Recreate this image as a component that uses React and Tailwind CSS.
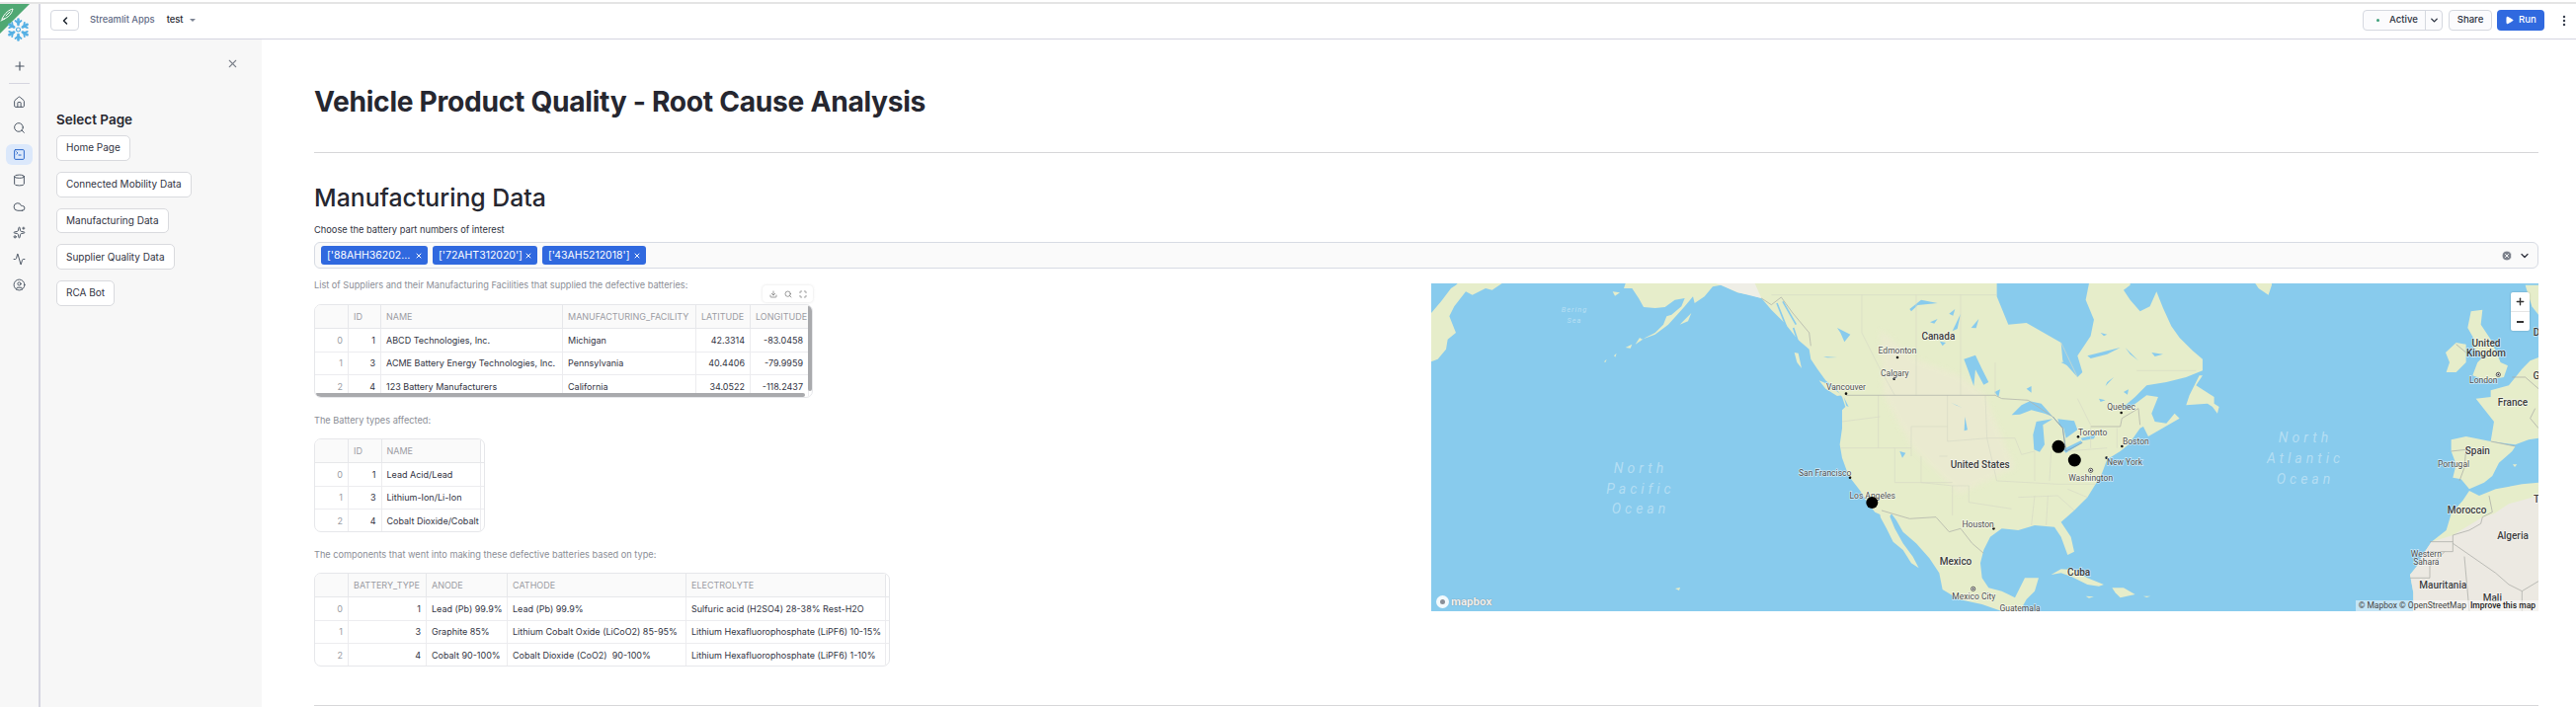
import React from "react";
import { Plus, Home, Search, SquareTerminal, Cylinder, Cloud, Sparkles, Activity, CircleUser, ChevronLeft, ChevronDown, Play, EllipsisVertical, X, Download, Maximize, CircleX } from "lucide-react";

const land = "#e6edca";
const water = "#88cbed";
const sand = "#ece9e2";

function Logo() {
  const arms = [0, 60, 120, 180, 240, 300];
  return (
    <svg width="39" height="50" viewBox="0 0 39 50" className="block">
      <polygon points="0,0 30,0 0,30" fill="#4fa873" />
      <g fill="none" stroke="#fff" strokeWidth="1" strokeLinecap="round">
        <path d="M2 15 C5 9 9 6 13 5 C12 10 8 14 4 15 Z" />
        <path d="M1 17 L5 15 M6 12 L10 8" />
      </g>
      <g transform="translate(18.5 26)" stroke="#55b0e4" strokeWidth="2.6" strokeLinecap="round" fill="none">
        {arms.map((a) => (
          <g key={a} transform={`rotate(${a})`}>
            <path d="M0 -5 L0 -10.5" />
            <path d="M-3 -9 L0 -6.5 L3 -9" strokeWidth="1.8" />
          </g>
        ))}
        <circle r="2" strokeWidth="1.2" />
      </g>
    </svg>
  );
}

const railIcons = [Home, Search, SquareTerminal, Cylinder, Cloud, Sparkles, Activity, CircleUser];

function Rail() {
  return (
    <aside className="flex w-[41px] shrink-0 flex-col border-r-2 border-[#d5d5e0] bg-[#f7f7f7]">
      <Logo />
      <div className="flex h-[26px] items-center justify-center">
        <Plus size={14} className="text-[#4b5563]" />
      </div>
      <div className="mx-[9px] mt-[4px] h-px bg-[#d5d5e0]" />
      <div className="mt-[5px] flex flex-col">
        {railIcons.map((Icon, i) => (
          <div key={i} className="flex h-[26.5px] items-center justify-center">
            <div className={i === 2 ? "flex h-[21px] w-[27px] items-center justify-center rounded-md bg-[#dbe8fb]" : "flex h-[21px] w-[27px] items-center justify-center"}>
              <Icon size={13} strokeWidth={1.8} className={i === 2 ? "text-[#2563c9]" : "text-[#4b5563]"} />
            </div>
          </div>
        ))}
      </div>
    </aside>
  );
}

function Header() {
  return (
    <header className="flex h-[36px] shrink-0 items-center border-b border-[#d5d5e0] bg-white pb-[2px] pl-[10px] pr-[5px]">
      <button className="flex h-[21px] w-[29px] items-center justify-center rounded-[4px] border border-[#d5d8e0]">
        <ChevronLeft size={12} strokeWidth={3} className="text-[#1e252f]" />
      </button>
      <span className="ml-[11px] text-[9.4px] font-medium text-[#5f6b85]">Streamlit Apps</span>
      <span className="ml-[12px] text-[9.4px] font-medium text-[#1e252f]">test</span>
      <span className="ml-[6px] h-0 w-0 border-x-[3px] border-t-[3px] border-x-transparent border-t-[#7d8494]" />
      <div className="ml-auto flex items-center">
        <div className="flex h-[21px] w-[81px] items-center rounded-[4px] border border-[#d5d8e0] bg-[#fbfbfd]">
          <span className="ml-[13px] h-[3px] w-[3px] rounded-full bg-[#3f9f7b]" />
          <span className="ml-[10px] w-[28px] text-[9.6px] font-medium text-[#2b3240]">Active</span>
          <span className="ml-[8px] h-full w-px bg-[#d5d8e0]" />
          <span className="flex flex-1 justify-center"><ChevronDown size={11} strokeWidth={3} className="text-[#2b3240]" /></span>
        </div>
        <div className="ml-[6px] flex h-[21px] w-[44px] items-center justify-center rounded-[4px] border border-[#d5d8e0] bg-[#fbfbfd] text-[9.6px] font-medium text-[#2b3240]">Share</div>
        <div className="ml-[5px] flex h-[21px] w-[48px] items-center justify-center gap-[5px] rounded-[4px] bg-[#3069df] text-[9.6px] font-medium text-white">
          <Play size={9} fill="#fff" />Run
        </div>
        <EllipsisVertical size={14} strokeWidth={2.2} className="ml-[13px] text-[#3b4250]" />
      </div>
    </header>
  );
}

const pages = ["Home Page", "Connected Mobility Data", "Manufacturing Data", "Supplier Quality Data", "RCA Bot"];

function Sidebar() {
  return (
    <nav className="flex w-[224px] shrink-0 flex-col bg-[#f7f7f7] pl-[16px]">
      <div className="mt-[18px] flex justify-end pr-[23px]">
        <X size={13} className="text-[#7d828c]" />
      </div>
      <h3 className="mt-[42px] text-[13.5px] font-semibold leading-[16px] text-[#262730]">Select Page</h3>
      <div className="mt-[8px] flex flex-col items-start gap-[11px]">
        {pages.map((p) => (
          <button key={p} className="flex h-[25.75px] items-center rounded-[5px] border border-[#d9dade] bg-white px-[9px] text-[10px] text-[#31333f]">{p}</button>
        ))}
      </div>
    </nav>
  );
}

function Table({ cols, rows, outer, children }) {
  return (
    <div className="relative h-[95px] overflow-hidden rounded-[7px] border border-[#e6e7ea] bg-white" style={{ width: outer }}>
      <div className="flex h-[24px] border-b border-[#e6e7ea]">
        {cols.map((c, i) => (
          <div key={i} className="flex items-center overflow-hidden whitespace-nowrap border-r border-[#e6e7ea] bg-[#fafafa] px-[5px] text-[9px] text-[#9a9ca3]" style={{ width: c.w }}>{c.label}</div>
        ))}
      </div>
      {rows.map((r, ri) => (
        <div key={ri} className="flex h-[23.5px] border-b border-[#ececef]">
          {r.map((v, i) => (
            <div key={i} className={`flex items-center overflow-hidden whitespace-pre border-r border-[#ececef] px-[5px] text-[9px] ${cols[i].right ? "justify-end" : ""} ${i === 0 ? "text-[#9a9ca3]" : "text-[#31333f]"}`} style={{ width: cols[i].w }}>{v}</div>
          ))}
        </div>
      ))}
      {children}
    </div>
  );
}

const t1cols = [
  { w: 34, label: "", right: true }, { w: 33, label: "ID", right: true }, { w: 184, label: "NAME" },
  { w: 135, label: "MANUFACTURING_FACILITY" }, { w: 55, label: "LATITUDE", right: true }, { w: 59, label: "LONGITUDE", right: true },
];
const t1rows = [
  ["0", "1", "ABCD Technologies, Inc.", "Michigan", "42.3314", "-83.0458"],
  ["1", "3", "ACME Battery Energy Technologies, Inc.", "Pennsylvania", "40.4406", "-79.9959"],
  ["2", "4", "123 Battery Manufacturers", "California", "34.0522", "-118.2437"],
];
const t2cols = [{ w: 34, label: "", right: true }, { w: 33.5, label: "ID", right: true }, { w: 100, label: "NAME" }];
const t2rows = [["0", "1", "Lead Acid/Lead"], ["1", "3", "Lithium-Ion/Li-Ion"], ["2", "4", "Cobalt Dioxide/Cobalt"]];
const t3cols = [
  { w: 34, label: "", right: true }, { w: 79, label: "BATTERY_TYPE", right: true }, { w: 82, label: "ANODE" },
  { w: 181, label: "CATHODE" }, { w: 202, label: "ELECTROLYTE" },
];
const t3rows = [
  ["0", "1", "Lead (Pb) 99.9%", "Lead (Pb) 99.9%", "Sulfuric acid (H2SO4) 28-38% Rest-H2O"],
  ["1", "3", "Graphite 85%", "Lithium Cobalt Oxide (LiCoO2) 85-95%", "Lithium Hexafluorophosphate (LiPF6) 10-15%"],
  ["2", "4", "Cobalt 90-100%", "Cobalt Dioxide (CoO2)  90-100%", "Lithium Hexafluorophosphate (LiPF6) 1-10%"],
];

function Tag({ w, children }) {
  return (
    <span className="flex h-[19px] items-center justify-between rounded-[3px] bg-[#3069df] pl-[6px] pr-[5px] text-[10.5px] text-white" style={{ width: w }}>
      <span>{children}</span>
      <X size={8} strokeWidth={3} />
    </span>
  );
}

const mainland = "-313,0 -318,15 -293,15 -273,45 -258,72 -223,75 -193,72 -163,50 -133,45 -143,70 -173,95 -188,100 -198,125 -223,150 -253,165 -283,185 -263,170 -223,155 -183,125 -133,70 -108,40 -103,60 -73,40 -48,10 -23,5 27,28 67,35 100,45 130,80 170,120 210,170 245,200 250,230 270,260 295,295 330,325 345,345 355,375 345,385 345,440 338,490 345,530 365,585 400,630 425,670 445,695 460,702 462,712 480,745 500,785 530,810 555,850 578,865 560,830 530,790 505,745 490,708 495,700 510,720 530,755 570,790 610,835 640,880 650,930 700,960 770,975 830,996 885,996 905,960 930,935 942,895 900,895 885,925 870,955 830,935 790,925 770,895 765,850 775,810 795,770 830,745 880,750 930,735 990,740 1010,770 1030,825 1050,815 1040,770 1010,725 1050,690 1090,650 1115,610 1135,575 1150,535 1190,510 1215,490 1250,440 1260,435 1275,465 1370,410 1355,395 1330,425 1295,420 1285,395 1305,345 1270,340 1210,385 1200,375 1235,345 1270,310 1330,300 1390,285 1440,265 1440,230 1410,205 1370,165 1345,130 1320,75 1300,25 1280,70 1250,85 1220,50 1200,20 1220,5 1220,0";

const waters = [
  "815,0 815,40 850,125 905,120 1010,180 1015,235 1060,285 1075,270 1060,220 1100,160 1110,110 1085,50 1095,0",
  "860,400 890,370 915,358 950,365 985,405 960,395 920,385 885,398",
  "935,420 985,412 955,430 960,490 945,512 928,505 925,460",
  "1000,412 1050,418 1060,445 1025,470 1018,440 1005,430",
  "1015,505 1070,478 1075,484 1025,515",
  "1070,470 1115,460 1110,472 1075,478",
  "715,230 750,218 770,260 790,300 775,308 750,262 745,312 728,265",
  "550,78 585,50 635,60 575,66 555,85",
  "612,118 635,108 625,122",
  "670,92 688,78 682,98",
  "680,145 705,92 695,138",
  "737,135 760,108 752,136",
  "642,176 660,180 650,190",
  "330,135 370,155 352,178 340,150",
  "288,222 330,225 300,226",
  "808,330 825,322 820,345",
  "905,320 920,312 920,332",
  "676,362 710,378 690,370",
  "718,405 726,445 716,448",
  "520,510 538,515 528,530",
  "1090,220 1150,205 1190,195 1150,215 1100,228",
  "1205,195 1245,235 1220,215",
  "1285,210 1320,215 1295,222",
  "1150,300 1170,285 1145,312",
  "1125,350 1145,355 1130,360",
  "1200,330 1215,322 1212,338",
  "1130,150 1150,155 1140,160",
  "1010,240 1030,235 1030,250",
];

const islands = [
  "1430,280 1440,280 1420,310 1475,345 1475,365 1490,375 1485,395 1470,375 1455,365 1390,370 1400,340",
  "980,885 1010,868 1050,870 1090,895 1140,915 1125,920 1090,915 1040,890 1010,880",
  "1165,925 1200,925 1235,945 1190,955 1175,940",
  "1085,950 1110,952 1095,956",
  "1260,950 1282,950 1270,954",
  "1600,0 1610,15 1640,35 1650,5 1650,0",
  "275,295 300,305 345,340 330,342 295,320",
  "200,210 212,212 222,258 208,240",
  "-148,125 -113,90 -123,115",
  "-313,195 -293,185 -298,197",
  "-348,220 -340,212 -344,224",
  "-378,238 -370,230 -374,240",
  "-283,185 -270,165 -262,170",
  "-352,25 -330,28 -345,38",
];

const europe = [
  "475,135 485,85 520,80 515,125 545,170 575,240 597,250 585,285 530,295 490,280 505,240 520,225 490,190 495,170",
  "440,180 470,185 470,240 440,270 410,270 420,240 408,210",
  "650,5 690,5 690,95 670,70",
  "500,350 545,345 545,325 600,310 640,260 665,235 690,225 690,470 660,475 620,490 545,480 555,420",
  "425,475 470,465 545,480 620,495 610,510 570,545 550,585 525,605 480,625 455,595 430,590 440,550 425,510",
  "612,550 625,550 618,558",
];

const faint = "M130 35L815 35M405 35L405 150L455 250L505 340M570 35L570 340M705 35L705 340M810 240L810 340M1010 180L1060 285M345 420L460 405M340 500L555 500M455 340L455 500M555 435L665 435M555 435L555 525M665 340L665 480L790 470L870 470M505 500L505 605L680 605M585 525L585 605L680 615L680 705M780 340L785 470L815 600M640 525L665 525M680 615L730 615L730 665L860 685M815 600L1000 610L1115 610M880 650L1000 645L1050 690M930 645L920 735M970 645L965 735M870 470L890 520L930 510L930 600M980 510L975 600M1030 510L1150 500M1090 650L1030 625M1100 440L1100 500M1180 440L1180 500M1240 265L1420 265M1060 350L1100 430";
const border = "M357 340L810 340L830 350L910 355L985 405L1015 440L1025 510M465 690L550 715L630 710L670 755L705 745L740 790L775 820M1100 435L1190 435L1195 410L1245 380L1250 430M100 45L130 65L160 42L195 90L245 150L250 190";

const labels = [
  ["Canada", 637, 162, 1],
  ["Edmonton", 513, 205], ["Calgary", 505, 272], ["Vancouver", 357, 316], ["San Francisco", 293, 577], ["Los Angeles", 437, 646],
  ["United States", 764, 551, 1], ["Houston", 758, 733], ["Mexico", 690, 845, 1], ["Mexico City", 745, 950], ["Guatemala", 885, 988],
  ["Cuba", 1064, 880, 1], ["Toronto", 1106, 452], ["Washington", 1100, 590], ["New York", 1203, 544], ["Boston", 1237, 481], ["Quebec", 1193, 375],
  ["United", 2301, 184, 1], ["Kingdom", 2301, 214, 1], ["London", 2293, 294], ["France", 2382, 363, 1], ["Spain", 2275, 511, 1], ["Portugal", 2202, 548],
  ["Morocco", 2243, 691, 1], ["Algeria", 2382, 769, 1], ["Western", 2119, 822], ["Sahara", 2119, 846], ["Mauritania", 2170, 917, 1], ["Mali", 2320, 957, 1],
  ["D", 2454, 150, 1], ["G", 2454, 282, 1], ["T", 2454, 658, 1],
];
const cities = [[513, 225], [503, 290], [357, 335], [369, 590], [805, 745], [1062, 466], [1148, 530], [1195, 495], [1193, 393]];
const capitals = [[743, 928], [1100, 568], [2338, 277]];
const oceans = [
  ["North", 1661 - 1449, 473 - 286], ["Pacific", 212, 208], ["Ocean", 212, 228],
  ["North", 2334 - 1449, 442 - 286], ["Atlantic", 885, 177], ["Ocean", 885, 198],
];

function MapArt() {
  return (
    <svg viewBox="0 0 1121 332" className="block h-full w-full">
      <rect width="1121" height="332" fill={water} />
      <polygon transform="scale(.3333)" fill={land} points="0,90 30,55 60,15 75,5 80,0 215,0 185,20 165,15 125,35 105,25 70,70 55,100 75,150 50,170 45,200 20,230 0,238" />
      <g transform="translate(301 0) scale(.3333)">
        <polygon points={mainland} fill={land} />
        <polygon points="-40,0 80,0 100,45 30,28 -23,5" fill="#efeee6" />
        <polygon points="460,140 570,230 700,280 780,340 870,560 700,640 560,500 470,340" fill="#ecead2" opacity=".75" className="blur-[8px]" />
        {waters.map((p, i) => <polygon key={i} points={p} fill={water} />)}
        {islands.map((p, i) => <polygon key={i} points={p} fill={land} />)}
        <path d="M147 60L175 130M165 55L205 125M197 135L212 180" stroke={water} strokeWidth="5" fill="none" />
        <polygon points="350,345 365,375 358,372" fill={water} />
        <path d={faint} fill="none" stroke="#d6d9c6" strokeWidth="2" />
        <path d={border} fill="none" stroke="#b3b5ab" strokeWidth="2.4" />
        <path d="M985 405L1015 440L1025 510L1075 484" fill="none" stroke="#7f9fb8" strokeWidth="2.4" />
      </g>
      <polygon points="247,309 252,308 251,311" fill={land} />
      <g transform="translate(891 0) scale(.3333)">
        {europe.map((p, i) => <polygon key={i} points={p} fill={land} />)}
        <polygon points="480,630 510,645 560,625 640,610 690,605 690,996 310,996 310,940 300,885 320,860 345,815 365,785 410,750 425,700 460,660" fill={land} />
        <polygon points="365,785 430,765 520,710 555,700 600,670 690,645 690,996 310,996 310,940 300,885 320,860 345,815" fill={sand} />
        <path d="M440 185L470 210M425 510L470 505L465 560L450 600M545 480L620 495M610 285L650 285L690 320M680 380L665 410L690 440M540 645L550 695L520 710L515 730L480 750L430 765L430 815L360 815M360 785L430 785M430 790L560 880L600 915L640 935L690 905M300 895L360 895L360 860L405 815M465 830L480 996M640 935L640 996" fill="none" stroke="#a9aaa4" strokeWidth="2.2" />
      </g>
      <g className="[font-family:Roboto,sans-serif]" textAnchor="middle" fontStyle="italic" fontSize="14" fill="#fff" fillOpacity=".38" letterSpacing="4">
        {oceans.map(([t, x, y], i) => <text key={i} x={x} y={y + 5}>{t}</text>)}
      </g>
      <g className="[font-family:Roboto,sans-serif]" textAnchor="middle" fontStyle="italic" fontSize="7.5" fill="#fff" fillOpacity=".4" letterSpacing="1">
        <text x="145" y="29">Bering</text>
        <text x="145" y="40">Sea</text>
      </g>
      {cities.map(([x, y], i) => <circle key={i} cx={x / 3 + 301} cy={y / 3} r="1.3" fill="#111" />)}
      {capitals.map(([x, y], i) => (
        <g key={i}>
          <circle cx={x / 3 + 301} cy={y / 3} r="2.1" fill="#fff" stroke="#333" strokeWidth=".8" />
          <circle cx={x / 3 + 301} cy={y / 3} r=".9" fill="#222" />
        </g>
      ))}
      <g className="[font-family:Roboto,sans-serif]" textAnchor="middle" style={{ paintOrder: "stroke" }} stroke="#fff" strokeOpacity=".6" strokeWidth="1.4">
        {labels.map(([t, x, y, major], i) => (
          <text key={i} x={x / 3 + 301} y={y / 3 + 3} fontSize={major ? 10 : 8.5} fontWeight={major ? 500 : 400} fill={major ? "#3d3d3d" : "#4f4f4f"}>{t}</text>
        ))}
      </g>
      <circle cx="446.3" cy="222" r="6" fill="#000" />
      <circle cx="635" cy="165.3" r="6.5" fill="#000" />
      <circle cx="651.3" cy="179" r="6.5" fill="#000" />
    </svg>
  );
}

function MapPanel() {
  return (
    <div className="relative mt-[5px] h-[332px] overflow-hidden [font-family:Roboto,sans-serif]">
      <MapArt />
      <div className="absolute right-[9px] top-[9px] flex w-[19px] flex-col overflow-hidden rounded-[2px] bg-white shadow-[0_0_2px_rgba(0,0,0,.25)]">
        <div className="flex h-[20px] items-center justify-center border-b border-[#e5e5e5]"><Plus size={11} strokeWidth={3} className="text-[#333]" /></div>
        <div className="flex h-[19px] items-center justify-center"><span className="h-[2px] w-[7px] bg-[#333]" /></div>
      </div>
      <div className="absolute bottom-[3px] left-[5px] flex items-center gap-[2px]">
        <span className="flex h-[13px] w-[13px] items-center justify-center rounded-full bg-white/90"><span className="h-[5px] w-[5px] rounded-full bg-[#8a8f98]" /></span>
        <span className="text-[11.5px] font-bold leading-none text-white/90 [text-shadow:0_0_1px_#666]">mapbox</span>
      </div>
      <div className="absolute bottom-0 right-0 flex h-[11px] items-center gap-[4px] bg-white/50 px-[3px] text-[8.5px] leading-none text-[#444]">
        <span>© Mapbox © OpenStreetMap</span>
        <span className="font-medium text-[#222]">Improve this map</span>
      </div>
    </div>
  );
}

const caption = "text-[9.2px] leading-[14px] text-[#8b8e96]";

function Main() {
  return (
    <main className="min-w-0 flex-1 overflow-hidden bg-white pl-[53px] pr-[38px] pt-[43px]">
      <h1 className="text-[28.2px] font-bold leading-[40px] tracking-[-0.3px] text-[#262730]">Vehicle Product Quality - Root Cause Analysis</h1>
      <hr className="mt-[31px] border-[#d6d6d8]" />
      <h2 className="mt-[27px] text-[24.8px] font-medium leading-[36px] text-[#262730]">Manufacturing Data</h2>
      <label className="mt-[8px] block text-[9.3px] leading-[14px] text-[#31333f]">Choose the battery part numbers of interest</label>
      <div className="mt-[5px] flex h-[27px] items-center rounded-[6px] border border-[#d7dbe3] bg-[#fafafa] pl-[6px] pr-[7px]">
        <div className="flex gap-[5px]">
          <Tag w={108}>['88AHH36202...</Tag>
          <Tag w={106}>['72AHT312020']</Tag>
          <Tag w={105}>['43AH5212018']</Tag>
        </div>
        <CircleX size={12} fill="#7d828c" stroke="#fafafa" className="ml-auto" />
        <ChevronDown size={12} strokeWidth={2.6} className="ml-[6px] text-[#31333f]" />
      </div>
      <div className="mt-[10px] flex">
        <section className="w-[1131px] shrink-0">
          <p className={caption}>List of Suppliers and their Manufacturing Facilities that supplied the defective batteries:</p>
          <div className="relative mt-[12px] w-[505px]">
            <div className="absolute -top-[19px] right-0 flex h-[17px] w-[51px] items-center justify-around rounded-[4px] bg-white px-[3px] shadow-[0_0_3px_rgba(0,0,0,.12)]">
              <Download size={8} className="text-[#777]" strokeWidth={2.2} />
              <Search size={8} className="text-[#777]" strokeWidth={2.2} />
              <Maximize size={8} className="text-[#777]" strokeWidth={2.2} />
            </div>
            <Table cols={t1cols} rows={t1rows} outer={505}>
              <div className="absolute bottom-0 left-0 h-[4px] w-[496px] rounded-full bg-[#a9aaad]" />
              <div className="absolute right-0 top-0 h-[87px] w-[4px] rounded-full bg-[#a9aaad]" />
            </Table>
          </div>
          <p className={`mt-[16px] ${caption}`}>The Battery types affected:</p>
          <div className="mt-[11px]">
            <Table cols={t2cols} rows={t2rows} outer={173} />
          </div>
          <p className={`mt-[16px] ${caption}`}>The components that went into making these defective batteries based on type:</p>
          <div className="mt-[11px]">
            <Table cols={t3cols} rows={t3rows} outer={583} />
          </div>
        </section>
        <section className="min-w-0 flex-1">
          <MapPanel />
        </section>
      </div>
      <hr className="mt-[39px] border-[#d6d6d8]" />
    </main>
  );
}

export default function App() {
  return (
    <div className="flex h-[716px] w-[2608px] flex-col overflow-hidden bg-white [font-family:Inter,sans-serif]">
      <div className="h-[4px] shrink-0 border-t-2 border-white bg-[#e4e4e4]" />
      <div className="flex min-h-0 flex-1">
        <Rail />
        <div className="flex min-w-0 flex-1 flex-col">
          <Header />
          <div className="flex min-h-0 flex-1">
            <Sidebar />
            <Main />
          </div>
        </div>
      </div>
    </div>
  );
}
